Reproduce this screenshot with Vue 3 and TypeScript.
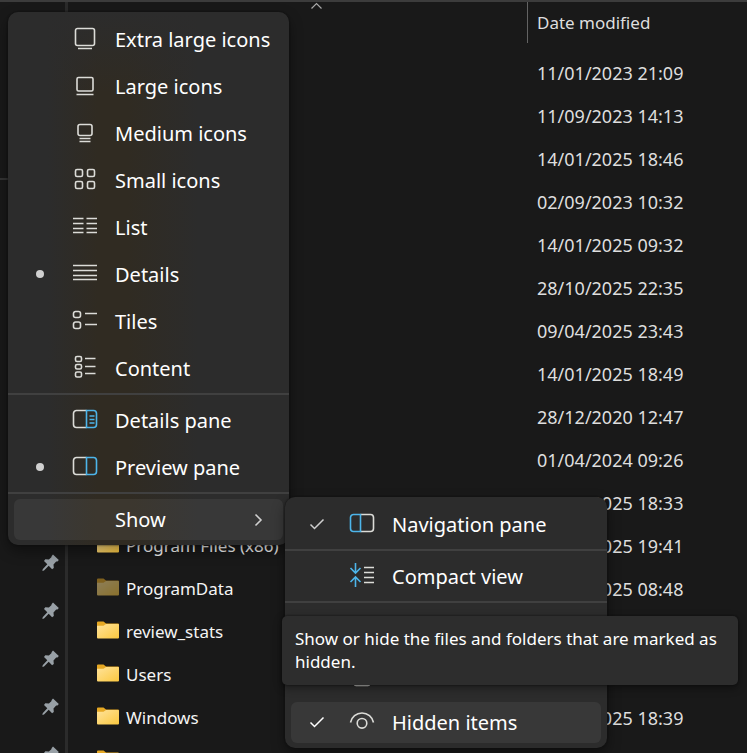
<script setup lang="ts">
type IconName =
  | 'xl' | 'large' | 'medium' | 'small' | 'list' | 'details' | 'tiles' | 'content'
  | 'detailsPane' | 'previewPane' | 'navPane' | 'compact' | 'checkBoxes' | 'document' | 'eye'

interface MenuItem {
  label: string
  icon?: IconName
  marked?: boolean
  active?: boolean
  submenu?: boolean
  iconOnly?: boolean
}

interface FileRow {
  folder?: boolean
  name?: string
  date?: string
  dimmed?: boolean
}

const viewMenu: MenuItem[][] = [
  [
    { label: 'Extra large icons', icon: 'xl' },
    { label: 'Large icons', icon: 'large' },
    { label: 'Medium icons', icon: 'medium' },
    { label: 'Small icons', icon: 'small' },
    { label: 'List', icon: 'list' },
    { label: 'Details', icon: 'details', marked: true },
    { label: 'Tiles', icon: 'tiles' },
    { label: 'Content', icon: 'content' },
  ],
  [
    { label: 'Details pane', icon: 'detailsPane' },
    { label: 'Preview pane', icon: 'previewPane', marked: true },
  ],
  [{ label: 'Show', active: true, submenu: true }],
]

const showMenu: MenuItem[][] = [
  [{ label: 'Navigation pane', icon: 'navPane', marked: true }],
  [{ label: 'Compact view', icon: 'compact' }],
  [
    { label: 'Item check boxes', icon: 'checkBoxes', iconOnly: true },
    { label: 'File name extensions', icon: 'document', iconOnly: true },
    { label: 'Hidden items', icon: 'eye', marked: true, active: true },
  ],
]

const rows: FileRow[] = [
  { date: '11/01/2023 21:09' },
  { date: '11/09/2023 14:13' },
  { date: '14/01/2025 18:46' },
  { date: '02/09/2023 10:32' },
  { date: '14/01/2025 09:32' },
  { date: '28/10/2025 22:35' },
  { date: '09/04/2025 23:43' },
  { date: '14/01/2025 18:49' },
  { date: '28/12/2020 12:47' },
  { date: '01/04/2024 09:26' },
  { date: '28/10/2025 18:33' },
  { folder: true, name: 'Program Files (x86)', date: '28/10/2025 19:41' },
  { folder: true, name: 'ProgramData', date: '28/10/2025 08:48', dimmed: true },
  { folder: true, name: 'review_stats' },
  { folder: true, name: 'Users' },
  { folder: true, name: 'Windows', date: '28/10/2025 18:39' },
  { folder: true },
]

const strokes: Record<IconName, string> = {
  xl: 'M5.500 3.500h15a2 2 0 0 1 2 2v13a2 2 0 0 1-2 2h-15a2 2 0 0 1-2-2v-13a2 2 0 0 1 2-2zM6 23.500h14',
  large: 'M6.500 5.500h13a1.500 1.500 0 0 1 1.500 1.500v10.500a1.500 1.500 0 0 1-1.500 1.500h-13a1.500 1.500 0 0 1-1.500-1.500v-10.500a1.500 1.500 0 0 1 1.500-1.500zM4.500 22.500h17',
  medium: 'M8 5.500h10a2 2 0 0 1 2 2v7a2 2 0 0 1-2 2h-10a2 2 0 0 1-2-2v-7a2 2 0 0 1 2-2zM7.500 19.500h11M7.500 22.500h11',
  small: 'M5 3.500h4a1.500 1.500 0 0 1 1.500 1.500v4a1.500 1.500 0 0 1-1.500 1.500h-4a1.500 1.500 0 0 1-1.500-1.500v-4a1.500 1.500 0 0 1 1.500-1.500zM17 3.500h4a1.500 1.500 0 0 1 1.500 1.500v4a1.500 1.500 0 0 1-1.500 1.500h-4a1.500 1.500 0 0 1-1.500-1.500v-4a1.500 1.500 0 0 1 1.500-1.500zM5 15.500h4a1.500 1.500 0 0 1 1.500 1.500v4a1.500 1.500 0 0 1-1.500 1.500h-4a1.500 1.500 0 0 1-1.500-1.500v-4a1.500 1.500 0 0 1 1.500-1.500zM17 15.500h4a1.500 1.500 0 0 1 1.500 1.500v4a1.500 1.500 0 0 1-1.500 1.500h-4a1.500 1.500 0 0 1-1.500-1.500v-4a1.500 1.500 0 0 1 1.500-1.500z',
  list: 'M1 5.500h10.500M14.500 5.500h10.500M1 10.500h10.500M14.500 10.500h10.500M1 15.500h10.500M14.500 15.500h10.500M1 19.500h10.500M14.500 19.500h10.500',
  details: 'M1 5.500h24M1 10.500h24M1 15.500h24M1 19.500h24',
  tiles: 'M3.500 4.500h3a2 2 0 0 1 2 2v2a2 2 0 0 1-2 2h-3a2 2 0 0 1-2-2v-2a2 2 0 0 1 2-2zM3.500 15h3a2 2 0 0 1 2 2v2.500a2 2 0 0 1-2 2h-3a2 2 0 0 1-2-2v-2.500a2 2 0 0 1 2-2zM13 6.500h12M13 17.500h12',
  content: 'M5 2.500h3a1.500 1.500 0 0 1 1.500 1.500v2a1.500 1.500 0 0 1-1.500 1.500h-3a1.500 1.500 0 0 1-1.500-1.500v-2a1.500 1.500 0 0 1 1.500-1.500zM5 10.500h3a1.500 1.500 0 0 1 1.500 1.500v1.500a1.500 1.500 0 0 1-1.500 1.500h-3a1.500 1.500 0 0 1-1.500-1.500v-1.500a1.500 1.500 0 0 1 1.500-1.500zM5 18h3a1.500 1.500 0 0 1 1.500 1.500v2a1.500 1.500 0 0 1-1.500 1.500h-3a1.500 1.500 0 0 1-1.500-1.500v-2a1.500 1.500 0 0 1 1.500-1.500zM13 4.500h10.500M13 12.500h10.500M13 19.500h10.500',
  detailsPane: 'M14.500 4.500h-10a3 3 0 0 0-3 3v11a3 3 0 0 0 3 3h10',
  previewPane: 'M14.500 4.500h-10a3 3 0 0 0-3 3v11a3 3 0 0 0 3 3h10',
  navPane: 'M11.500 4.500h10a3 3 0 0 1 3 3v11a3 3 0 0 1-3 3h-10',
  compact: 'M15 5.500h10M15 10.500h10M15 15.500h10M15 20.500h10',
  checkBoxes: 'M4.500 4.500h17v17h-17z',
  document: 'M5.500 1.500h11l4 4v17.500a1.500 1.500 0 0 1-1.500 1.500h-12a1.500 1.500 0 0 1-1.500-1.500z',
  eye: 'M1.500 14.500a11.700 11.700 0 0 1 23 0M13 10.500a4.800 4.800 0 1 1 0 9.600a4.800 4.800 0 1 1 0-9.600z',
}

const accents: Partial<Record<IconName, string>> = {
  detailsPane: 'M14.500 4.500h7a3 3 0 0 1 3 3v11a3 3 0 0 1-3 3h-7zM17.500 10h5M17.500 13.500h5M17.500 17h5',
  previewPane: 'M14.500 4.500h7a3 3 0 0 1 3 3v11a3 3 0 0 1-3 3h-7z',
  navPane: 'M11.500 4.500h-7a3 3 0 0 0-3 3v11a3 3 0 0 0 3 3h7z',
  compact: 'M6.500 1v10M1.500 6l5 5l5-5M6.500 25v-10M1.500 20l5-5l5 5',
}
</script>

<template>
  <div class="explorer">
    <nav class="sidebar" aria-label="Quick access">
      <div class="sidebar-rule"></div>
      <ul class="pins">
        <li v-for="n in 12" :key="n">
          <svg width="18" height="18" viewBox="0 0 18 18" aria-hidden="true">
            <path fill="#98a0a6" d="M9.500 2.200l1.500-1.700 5.800 5.600-1.300 1.500-1.300 0-2.700 2.800.3 3.600-1.700 1.300-3.400-3.500L2 16.600.4 16.900.700 15.200l4.600-4.900L2 6.900l1.300-1.600 3.600.1L9.600 3z" />
          </svg>
        </li>
      </ul>
    </nav>

    <main class="files">
      <table>
        <thead>
          <tr>
            <th class="name-head" scope="col" aria-sort="ascending" aria-label="Name">
              <svg width="13" height="8" viewBox="0 0 13 8" aria-hidden="true">
                <path d="M1.500 6.500l5-5l5 5" fill="none" stroke="#a8a8a8" stroke-width="1.200" />
              </svg>
            </th>
            <th class="date-head" scope="col"><span>Date modified</span></th>
          </tr>
        </thead>
        <tbody>
          <tr v-for="(row, i) in rows" :key="i">
            <td>
              <div v-if="row.folder" class="file">
                <svg :class="{ dimmed: row.dimmed }" width="22" height="18" viewBox="0 0 22 18" aria-hidden="true">
                  <defs>
                    <linearGradient :id="'folder' + i" x1="0" y1="0" x2="1" y2="1">
                      <stop offset="0" stop-color="#ffe39b" />
                      <stop offset="1" stop-color="#fbc83f" />
                    </linearGradient>
                  </defs>
                  <path d="M0 1.500Q0 .5 1 .5H6.500L9 2.500H21Q22 2.500 22 3.500V9H0z" fill="#e6a823" />
                  <path d="M0 4.700H6.500L9 3H21Q22 3 22 4V16.500Q22 17.500 21 17.500H1Q0 17.500 0 16.500z" :fill="'url(#folder' + i + ')'" />
                </svg>
                <span v-if="row.name">{{ row.name }}</span>
              </div>
            </td>
            <td class="date">{{ row.date }}</td>
          </tr>
        </tbody>
      </table>
    </main>

    <div
      v-for="(menu, m) in [viewMenu, showMenu]"
      :key="m"
      class="menu"
      :class="m === 0 ? 'view-menu' : 'show-menu'"
      role="menu"
    >
      <div v-for="(group, g) in menu" :key="g" class="group" role="group">
        <button
          v-for="item in group"
          :key="item.label"
          type="button"
          class="item"
          :class="{ active: item.active }"
          role="menuitem"
          :aria-label="item.label"
        >
          <span class="mark">
            <template v-if="item.marked">
              <span v-if="m === 0" class="dot"></span>
              <svg v-else width="16" height="12" viewBox="0 0 16 12" aria-hidden="true">
                <path d="M1.500 6.500l4 4l9-9" fill="none" :stroke="item.active ? '#ffffff' : '#cfcfcf'" stroke-width="1.500" />
              </svg>
            </template>
          </span>
          <span class="icon">
            <svg v-if="item.icon" width="26" height="26" viewBox="0 0 26 26" fill="none" stroke-width="1.600" aria-hidden="true">
              <path :d="strokes[item.icon]" stroke="#dcdcd8" />
              <path v-if="accents[item.icon]" :d="accents[item.icon]" stroke="#4db5ea" />
            </svg>
          </span>
          <span v-if="!item.iconOnly" class="label">{{ item.label }}</span>
          <svg v-if="item.submenu" class="chevron" width="9" height="14" viewBox="0 0 9 14" aria-hidden="true">
            <path d="M1.500 1.500l5.500 5.500l-5.500 5.500" fill="none" stroke="#d0d0d0" stroke-width="1.600" />
          </svg>
        </button>
      </div>
    </div>

    <div class="tooltip" role="tooltip">
      Show or hide the files and folders that are marked as hidden.
    </div>
  </div>
</template>

<style>
body {
  margin: 0;
  background: #191919;
}
</style>

<style scoped>
.explorer {
  position: relative;
  display: flex;
  box-sizing: border-box;
  height: 100vh;
  overflow: hidden;
  border-top: 2px solid #3c3c3c;
  background: #191919;
  color: #dedede;
  font-family: "Noto Sans", "Open Sans", sans-serif;
  font-size: 17px;
}

.sidebar {
  flex: none;
  box-sizing: border-box;
  width: 68px;
  padding-top: 176px;
  border-right: 3px solid #2b2b2b;
}

.sidebar-rule {
  height: 2px;
  margin-bottom: 23px;
  background: #343434;
}

.pins {
  margin: 0;
  padding: 0;
  list-style: none;
}

.pins li {
  display: flex;
  align-items: center;
  justify-content: flex-end;
  height: 48px;
  padding-right: 5px;
}

.files {
  flex: 1;
}

table {
  width: 100%;
  border-collapse: collapse;
  table-layout: fixed;
}

th {
  padding: 0 0 8px;
  font-weight: 400;
  text-align: left;
  vertical-align: top;
}

.name-head {
  width: 421px;
  padding-left: 38px;
  line-height: 8px;
  text-align: center;
}

.name-head svg {
  display: block;
  margin: 0 auto;
}

.date-head span {
  display: flex;
  align-items: center;
  height: 41px;
  padding-left: 9px;
  border-left: 1px solid #636363;
}

tbody tr {
  height: 43px;
}

td {
  padding: 0;
  line-height: 24px;
  white-space: nowrap;
}

.date {
  padding-left: 10px;
  font-size: 18px;
}

.file {
  display: flex;
  align-items: center;
  gap: 7px;
  padding-left: 29px;
  color: #f4f4f4;
}

.file svg {
  margin-bottom: 4px;
}

.dimmed {
  opacity: 0.5;
}

.menu {
  position: absolute;
  box-sizing: border-box;
  padding: 4px 0 2px;
  border-radius: 10px;
  background: #2c2c2c;
  box-shadow: 0 0 2px #0c0c0c, 0 6px 14px rgba(0, 0, 0, 0.4);
}

.view-menu {
  top: 10px;
  left: 8px;
  width: 281px;
  background:
    linear-gradient(#2c2c2c, rgba(44, 44, 44, 0) 80px),
    linear-gradient(90deg, #2c2c2c 40px, #302b22 90px, #302b22 120px, #2c2c2c 190px);
}

.show-menu {
  top: 495px;
  left: 285px;
  width: 322px;
}

.group {
  display: flow-root;
}

.group + .group::before {
  content: "";
  display: block;
  height: 2px;
  margin-top: 1px;
  border-bottom: 2px solid transparent;
  background: #404040;
  background-clip: padding-box;
}

.item {
  display: flex;
  align-items: center;
  width: 100%;
  height: 47px;
  padding: 0 24px 0 20px;
  border: 0;
  background: none;
  color: #ffffff;
  font: inherit;
  font-size: 20px;
  text-align: left;
}

.item.active {
  height: 41px;
  width: calc(100% - 12px);
  margin: 3px 6px;
  padding: 0 20px 0 14px;
  border-radius: 6px;
  background: rgba(255, 255, 255, 0.06);
}

.mark {
  display: flex;
  flex: none;
  justify-content: center;
  width: 24px;
  padding-bottom: 2px;
}

.dot {
  width: 8px;
  height: 8px;
  border-radius: 50%;
  background: #d0d0d0;
}

.icon {
  flex: none;
  width: 26px;
  height: 26px;
  margin: 0 17px 3px 20px;
}

.label {
  flex: 1;
  white-space: nowrap;
}

.tooltip {
  position: absolute;
  top: 614px;
  left: 282px;
  box-sizing: border-box;
  width: 456px;
  padding: 11px 13px 12px;
  border-radius: 5px;
  background: #2d2d2d;
  box-shadow: 0 0 2px #0c0c0c, 0 3px 8px rgba(0, 0, 0, 0.4);
  color: #ffffff;
  font-size: 17px;
  line-height: 23px;
}
</style>
